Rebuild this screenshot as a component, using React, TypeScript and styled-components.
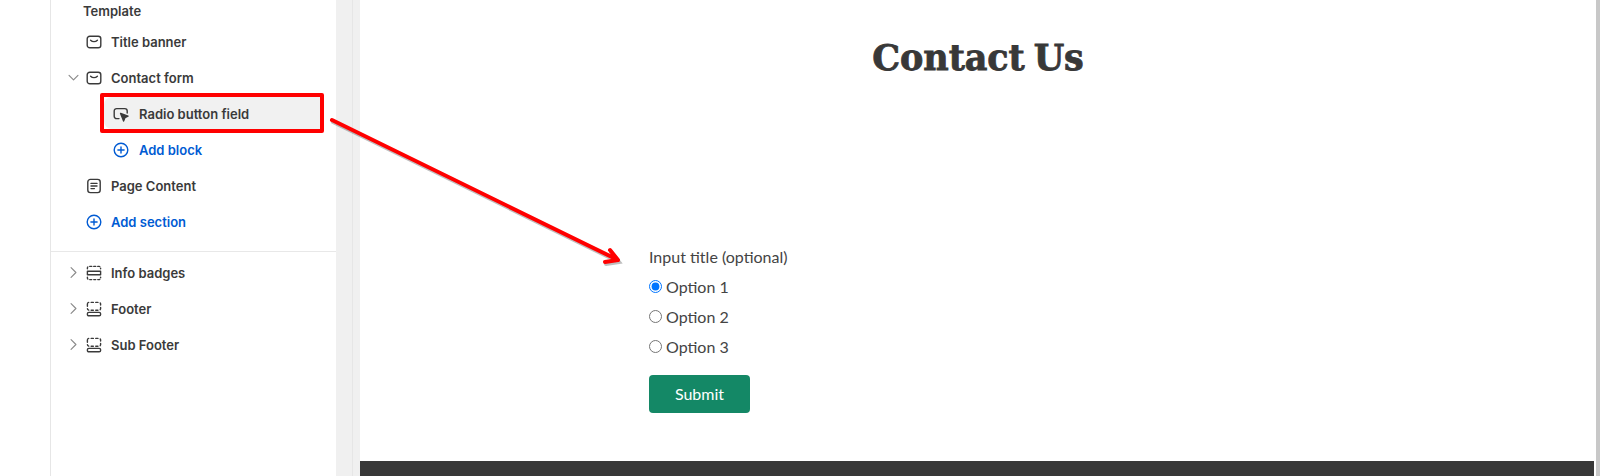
import React from 'react'
import styled, { createGlobalStyle } from 'styled-components'

const GlobalStyle = createGlobalStyle`
  html, body {
    margin: 0;
    padding: 0;
    height: 476px;
    overflow: hidden;
    background: #fff;
  }
`

const Page = styled.div`
  position: relative;
  display: flex;
  width: 1600px;
  height: 476px;
  overflow: hidden;
  background: #fff;
`

const LeftGutter = styled.div`
  width: 50px;
  flex: none;
`

const Sidebar = styled.aside`
  width: 285px;
  flex: none;
  border-left: 1px solid #e6e6e6;
  font-family: Inter, 'Liberation Sans', sans-serif;
  font-size: 13px;
  font-weight: 570;
  color: #3a3a3a;
`

const SectionLabel = styled.div`
  height: 25px;
  padding-left: 32px;
  line-height: 23px;
  font-weight: 600;
`

const Row = styled.div<{ $indent?: boolean; $link?: boolean }>`
  position: relative;
  display: flex;
  align-items: center;
  box-sizing: border-box;
  height: 36px;
  padding-bottom: 2px;
  padding-left: ${({ $indent }) => ($indent ? '62px' : '35px')};
  gap: ${({ $indent }) => ($indent ? '10px' : '9px')};
  color: ${({ $link }) => ($link ? '#005bd3' : '#3a3a3a')};
`

const Chevron = styled.span`
  position: absolute;
  left: 16px;
  top: 10px;
  width: 13px;
  height: 13px;
  color: #8a8a8a;
  display: flex;
`

const IconBox = styled.span`
  width: 16px;
  height: 16px;
  flex: none;
  display: flex;
`

const SelectedRow = styled(Row)`
  &::before {
    content: '';
    position: absolute;
    left: 53px;
    right: 16px;
    top: 0;
    bottom: 4px;
    background: #f1f1f1;
    border-radius: 8px 0 0 8px;
  }
  &::after {
    content: '';
    position: absolute;
    left: 49px;
    right: 12px;
    top: -4px;
    bottom: 0;
    border: 4px solid #ff0000;
    border-radius: 2px;
  }
  > * {
    position: relative;
    z-index: 1;
  }
`

const Divider = styled.div`
  height: 1px;
  margin: 10px 0 4px;
  background: #e8e8e8;
`

const GrayRail = styled.div`
  width: 24px;
  flex: none;
  background: #f0f0f0;
  position: relative;
  &::after {
    content: '';
    position: absolute;
    left: 16px;
    top: 0;
    bottom: 0;
    width: 1px;
    background: #e6e6e6;
  }
`

const Preview = styled.main`
  flex: 1;
  display: flex;
  flex-direction: column;
  min-width: 0;
  color: #444;
  font-family: Lato, 'Open Sans', sans-serif;
`

const PreviewBody = styled.div`
  height: 461px;
  box-sizing: border-box;
  padding-top: 31px;
`

const Title = styled.h1`
  margin: 0 0 161px;
  width: 1236px;
  text-align: center;
  font-family: 'DejaVu Serif', serif;
  font-size: 35px;
  line-height: 54px;
  font-weight: 700;
  color: #383838;
  letter-spacing: -0.1px;
  word-spacing: -3px;
  -webkit-text-stroke: 0.8px #383838;
`

const Form = styled.form`
  margin-left: 289px;
  font-size: 16px;
`

const FieldLabel = styled.div`
  line-height: 22px;
  height: 26px;
`

const RadioRow = styled.label`
  display: flex;
  align-items: center;
  height: 30px;
  line-height: 22px;
  input {
    margin: 0 4px 2px 0;
    width: 13px;
    height: 13px;
  }
`

const SubmitButton = styled.button`
  display: block;
  margin-top: 13px;
  width: 101px;
  height: 38px;
  border: 0;
  border-radius: 4px;
  background: #148866;
  color: #fff;
  font-family: inherit;
  font-size: 16px;
  font-weight: 400;
  padding: 0 0 2px;
`

const FooterBar = styled.div`
  height: 15px;
  margin-right: 6px;
  background: #383838;
`

const ScrollEdge = styled.div`
  position: absolute;
  right: 0;
  top: 0;
  bottom: 0;
  width: 4px;
  background: #c8c8c8;
`

const ArrowLayer = styled.svg`
  position: absolute;
  left: 0;
  top: 0;
  pointer-events: none;
`

const Stroke = styled.svg.attrs({
  viewBox: '0 0 16 16',
  fill: 'none',
  stroke: 'currentColor',
  strokeWidth: 1.4,
  strokeLinecap: 'round',
  strokeLinejoin: 'round',
})`
  width: 100%;
  height: 100%;
`

const ChevronDown = () => (
  <Stroke>
    <path d="M2.5 5.5 8 11l5.5-5.5" />
  </Stroke>
)

const ChevronRight = () => (
  <Stroke>
    <path d="M5 2 11 8 5 14" />
  </Stroke>
)

const BannerIcon = () => (
  <Stroke>
    <rect x="1.2" y="2.2" width="13.6" height="11.6" rx="2.6" />
    <path d="M4.6 6.2c1.9 1.8 4.9 1.8 6.8 0" />
  </Stroke>
)

const PointerIcon = () => (
  <Stroke>
    <path d="M6 12.6H3.6A2.4 2.4 0 0 1 1.2 10.2V5a2.4 2.4 0 0 1 2.4-2.4h8.2A2.4 2.4 0 0 1 14.2 5v2" />
    <path d="M7.6 7.4 15 10.2 12 11.6 10.6 15Z" fill="currentColor" />
  </Stroke>
)

const PlusCircleIcon = () => (
  <Stroke strokeWidth={1.5}>
    <circle cx="8" cy="8" r="6.8" />
    <path d="M8 4.9v6.2M4.9 8h6.2" />
  </Stroke>
)

const ContentIcon = () => (
  <Stroke>
    <rect x="1.8" y="1.4" width="12.4" height="13.2" rx="2.6" />
    <path d="M5 5.4h6M5 8h6M5 10.6h3.4" />
  </Stroke>
)

const BadgesIcon = () => (
  <Stroke>
    <path d="M1.4 6.2h13.2v3.6H1.4z" />
    <path d="M1.4 3.8V3c0-.9.7-1.6 1.6-1.6h10c.9 0 1.6.7 1.6 1.6v.8" strokeDasharray="2 2" />
    <path d="M1.4 12.2v.8c0 .9.7 1.6 1.6 1.6h10c.9 0 1.6-.7 1.6-1.6v-.8" strokeDasharray="2 2" />
  </Stroke>
)

const FooterIcon = () => (
  <Stroke>
    <path d="M1.4 3V7.6C1.4 8.5 2.1 9.2 3 9.2h10c.9 0 1.6-.7 1.6-1.6V3c0-.9-.7-1.6-1.6-1.6H3C2.1 1.4 1.4 2.1 1.4 3Z" strokeDasharray="2.2 2.4" />
    <rect x="1.4" y="11.4" width="13.2" height="3.4" rx="1.4" />
  </Stroke>
)

const App = () => {
  return (
    <Page>
      <GlobalStyle />
      <LeftGutter />
      <Sidebar>
        <SectionLabel>Template</SectionLabel>
        <Row>
          <IconBox><BannerIcon /></IconBox>
          Title banner
        </Row>
        <Row>
          <Chevron><ChevronDown /></Chevron>
          <IconBox><BannerIcon /></IconBox>
          Contact form
        </Row>
        <SelectedRow $indent>
          <IconBox><PointerIcon /></IconBox>
          <span>Radio button field</span>
        </SelectedRow>
        <Row $indent $link>
          <IconBox><PlusCircleIcon /></IconBox>
          Add block
        </Row>
        <Row>
          <IconBox><ContentIcon /></IconBox>
          Page Content
        </Row>
        <Row $link>
          <IconBox><PlusCircleIcon /></IconBox>
          Add section
        </Row>
        <Divider />
        <Row>
          <Chevron><ChevronRight /></Chevron>
          <IconBox><BadgesIcon /></IconBox>
          Info badges
        </Row>
        <Row>
          <Chevron><ChevronRight /></Chevron>
          <IconBox><FooterIcon /></IconBox>
          Footer
        </Row>
        <Row>
          <Chevron><ChevronRight /></Chevron>
          <IconBox><FooterIcon /></IconBox>
          Sub Footer
        </Row>
      </Sidebar>
      <GrayRail />
      <Preview>
        <PreviewBody>
          <Title>Contact Us</Title>
          <Form>
            <FieldLabel>Input title (optional)</FieldLabel>
            <RadioRow><input type="radio" name="opt" defaultChecked />Option 1</RadioRow>
            <RadioRow><input type="radio" name="opt" />Option 2</RadioRow>
            <RadioRow><input type="radio" name="opt" />Option 3</RadioRow>
            <SubmitButton type="button">Submit</SubmitButton>
          </Form>
        </PreviewBody>
        <FooterBar />
      </Preview>
      <ScrollEdge />
      <ArrowLayer width="1600" height="476" viewBox="0 0 1600 476">
        <g stroke="#000" strokeOpacity="0.25" strokeWidth="4" strokeLinecap="round" fill="none" transform="translate(1 2)">
          <path d="M332 120 618 260M610 250 618 260 605 262" />
        </g>
        <g stroke="#ff0000" strokeWidth="4" strokeLinecap="round" strokeLinejoin="round" fill="none">
          <path d="M332 120 618 260M610 250 618 260 605 262" />
        </g>
      </ArrowLayer>
    </Page>
  )
}

export default App
